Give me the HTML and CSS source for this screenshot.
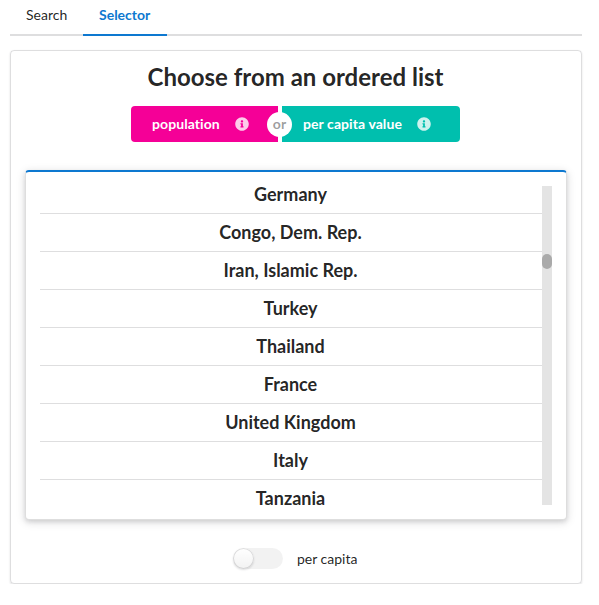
FILE: index.html
```html
<!DOCTYPE html>
<html lang="en">
<head>
<meta charset="utf-8">
<title>Selector</title>
<link rel="stylesheet" href="styles.css">
</head>
<body>
<nav class="tabs">
  <a class="tab">Search</a>
  <a class="tab active">Selector</a>
</nav>
<main class="segment">
  <h2 class="title">Choose from an ordered list</h2>
  <div class="buttons">
    <button class="button pink"><span>population</span><svg class="info" viewBox="0 0 512 512"><path d="M256 8C119.043 8 8 119.083 8 256c0 136.997 111.043 248 248 248s248-111.003 248-248C504 119.083 392.957 8 256 8zm0 110c23.196 0 42 18.804 42 42s-18.804 42-42 42-42-18.804-42-42 18.804-42 42-42zm56 254c0 6.627-5.373 12-12 12h-88c-6.627 0-12-5.373-12-12v-24c0-6.627 5.373-12 12-12h12v-64h-12c-6.627 0-12-5.373-12-12v-24c0-6.627 5.373-12 12-12h64c6.627 0 12 5.373 12 12v100h12c6.627 0 12 5.373 12 12v24z"/></svg></button>
    <div class="or"><span>or</span></div>
    <button class="button teal"><span>per capita value</span><svg class="info" viewBox="0 0 512 512"><path d="M256 8C119.043 8 8 119.083 8 256c0 136.997 111.043 248 248 248s248-111.003 248-248C504 119.083 392.957 8 256 8zm0 110c23.196 0 42 18.804 42 42s-18.804 42-42 42-42-18.804-42-42 18.804-42 42-42zm56 254c0 6.627-5.373 12-12 12h-88c-6.627 0-12-5.373-12-12v-24c0-6.627 5.373-12 12-12h12v-64h-12c-6.627 0-12-5.373-12-12v-24c0-6.627 5.373-12 12-12h64c6.627 0 12 5.373 12 12v100h12c6.627 0 12 5.373 12 12v24z"/></svg></button>
  </div>
  <section class="raised">
    <div class="scroller">
      <ul class="list">
        <li>Germany</li>
        <li>Congo, Dem. Rep.</li>
        <li>Iran, Islamic Rep.</li>
        <li>Turkey</li>
        <li>Thailand</li>
        <li>France</li>
        <li>United Kingdom</li>
        <li>Italy</li>
        <li>Tanzania</li>
      </ul>
      <div class="track"><div class="thumb"></div></div>
    </div>
  </section>
  <div class="toggle">
    <span class="switch"><span class="knob"></span></span>
    <span>per capita</span>
  </div>
</main>
</body>
</html>
```
FILE: styles.css
```css
* { box-sizing: border-box; }
body {
  margin: 0;
  padding: 0 17px 0 10px;
  background: #fff;
  color: rgba(0, 0, 0, .87);
  font: 14px/20px Lato, "Liberation Sans", sans-serif;
  font-variant-ligatures: none;
}
.tabs {
  display: flex;
  height: 36px;
  border-bottom: 2px solid rgba(34, 36, 38, .15);
}
.tab {
  width: 73px;
  height: 36px;
  padding: 5px 0 0 16px;
  border-bottom: 2px solid transparent;
}
.tab.active {
  width: 84px;
  border-color: #0d78d0;
  color: #0d78d0;
  font-weight: 700;
}
.segment {
  height: 534px;
  margin-top: 14px;
  padding: 0 14px;
  border: 1px solid rgba(34, 36, 38, .15);
  border-radius: 4px;
  box-shadow: 0 1px 2px 0 rgba(34, 36, 38, .15);
}
.title {
  margin: 11px 1px 14px 0;
  font-size: 24px;
  line-height: 30px;
  font-weight: 700;
  text-align: center;
}
.buttons {
  display: flex;
  width: 329px;
  height: 36px;
  margin: 0 auto 28px 106px;
}
.button {
  display: flex;
  align-items: center;
  justify-content: space-between;
  border: 0;
  padding: 0;
  color: #fff;
  font: 700 14px/14px Lato, "Liberation Sans", sans-serif;
  font-variant-ligatures: none;
  letter-spacing: .08px;
}
.pink {
  width: 147px;
  padding: 0 29px 0 21px;
  border-radius: 4px 0 0 4px;
  background: #f50097;
}
.teal {
  width: 178px;
  padding: 0 29px 0 21px;
  border-radius: 0 4px 4px 0;
  background: #00bfae;
}
.info {
  width: 14px;
  height: 14px;
  fill: #fff;
  opacity: .8;
}
.or {
  z-index: 1;
  display: flex;
  align-items: center;
  justify-content: center;
  width: 4px;
}
.or span {
  flex: none;
  width: 25px;
  height: 25px;
  margin-right: 1px;
  border-radius: 50%;
  background: #fff;
  color: rgba(0, 0, 0, .4);
  font-weight: 700;
  line-height: 24px;
  text-align: center;
}
.raised {
  height: 350px;
  padding: 14px;
  border: 1px solid rgba(34, 36, 38, .15);
  border-top: 2px solid #0d78d0;
  border-radius: 4px;
  box-shadow: 0 2px 4px 0 rgba(34, 36, 38, .12), 0 2px 10px 0 rgba(34, 36, 38, .15);
}
.scroller {
  display: flex;
  width: 512px;
  height: 319px;
}
.list {
  flex: 1;
  margin: 0;
  padding: 0;
  list-style: none;
  text-align: center;
}
.list li {
  height: 38px;
  padding-right: 1px;
  border-bottom: 1px solid rgba(34, 36, 38, .15);
  font-size: 18px;
  line-height: 37px;
  font-weight: 700;
}
.list li:first-child {
  height: 28px;
  line-height: 17px;
}
.list li:last-child {
  height: 25px;
  border-bottom: 0;
}
.track {
  width: 10px;
  height: 319px;
  padding-top: 68px;
  background: #e4e4e4;
}
.thumb {
  height: 15px;
  border-radius: 5px;
  background: #aaa;
}
.toggle {
  display: flex;
  align-items: center;
  gap: 14px;
  height: 21px;
  margin: 28px 0 0 208px;
}
.switch {
  width: 50px;
  height: 21px;
  border-radius: 11px;
  background: rgba(0, 0, 0, .05);
}
.knob {
  display: block;
  width: 21px;
  height: 21px;
  border-radius: 50%;
  background: #fff linear-gradient(transparent, rgba(0, 0, 0, .05));
  box-shadow: 0 1px 2px 0 rgba(34, 36, 38, .15), 0 0 0 1px rgba(34, 36, 38, .15) inset;
}
```
